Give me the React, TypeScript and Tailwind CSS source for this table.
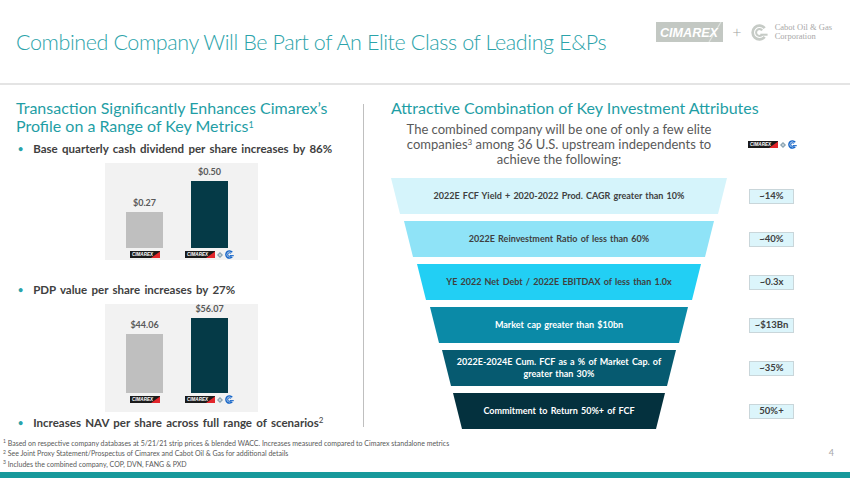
import React from 'react';

type Bar = { label: string; barCls: string; combined?: boolean };

const bands = [
  {
    text: '2022E  FCF Yield + 2020-2022  Prod. CAGR greater than 10%',
    cls: 'mx-0 bg-[#d5f4fb] text-[#404040]',
    value: '~14%',
  },
  {
    text: '2022E  Reinvestment  Ratio of less than 60%',
    cls: 'mx-[13px] bg-[#8fe3f7] text-[#404040]',
    value: '~40%',
  },
  {
    text: 'YE 2022  Net Debt / 2022E  EBITDAX of less than 1.0x',
    cls: 'mx-[26px] bg-[#22cff4] text-[#404040]',
    value: '~0.3x',
  },
  {
    text: 'Market  cap greater  than $10bn',
    cls: 'mx-[39px] bg-[#0b8aa7] text-white',
    value: '~$13Bn',
  },
  {
    text: '2022E-2024E  Cum. FCF as a % of Market  Cap. of\ngreater than 30%',
    cls: 'mx-[51px] bg-[#065a70] text-white',
    value: '~35%',
  },
  {
    text: 'Commitment to Return 50%+  of FCF',
    cls: 'mx-[62px] bg-[#04313e] text-white',
    value: '50%+',
  },
];

const CimarexMini = () => (
  <svg width="30" height="7" viewBox="0 0 30 7" className="shrink-0">
    <rect x="0" y="0" width="30" height="7" fill="#1b1b1b" />
    <polygon points="21,7 30,0.5 30,7" fill="#e2262b" />
    <text
      x="2"
      y="5.4"
      fontSize="5"
      fontStyle="italic"
      fontWeight="900"
      fill="#ffffff"
      textLength="21"
      lengthAdjust="spacingAndGlyphs"
      fontFamily="Liberation Sans, Arial, sans-serif"
    >
      CIMAREX
    </text>
  </svg>
);

const CabotMark = ({ size, color }: { size: number; color: string }) => (
  <svg width={size} height={size} viewBox="0 0 20 20" className="shrink-0">
    <path d="M16.1 4.9 A8 8 0 1 0 16.1 15.1" fill="none" stroke={color} strokeWidth="3.2" />
    <path d="M13.2 7.6 A4 4 0 1 0 13.2 12.4" fill="none" stroke={color} strokeWidth="2.4" />
    <path d="M11 12.6 H19.5" stroke={color} strokeWidth="2.4" />
  </svg>
);

const Diamond = () => (
  <svg width="6" height="6" viewBox="0 0 6 6" className="shrink-0">
    <path d="M3 0 L6 3 L3 6 L0 3 Z" fill="#7f9bab" />
    <path d="M3 1.6 V4.4 M1.6 3 H4.4" stroke="#ffffff" strokeWidth="0.6" />
  </svg>
);

const CombinedMini = () => (
  <span className="flex items-center gap-[2px]">
    <CimarexMini />
    <Diamond />
    <CabotMark size={9} color="#1565c8" />
  </span>
);

const BarChart = ({ heightCls, padCls, bars }: { heightCls: string; padCls: string; bars: Bar[] }) => (
  <div className={`ml-[89px] flex w-[153px] items-end gap-[28px] bg-[#f2f2f2] pl-[21px] ${heightCls} ${padCls}`}>
    {bars.map((bar) => (
      <div key={bar.label} className="flex w-[37px] flex-col items-center">
        <span className="mb-[4px] text-[9px] font-bold leading-[10px] text-[#595959]">{bar.label}</span>
        <div className={`w-full ${bar.barCls}`} />
        <div className="mt-[3px] flex h-[7px] items-center justify-center">
          {bar.combined ? <CombinedMini /> : <CimarexMini />}
        </div>
      </div>
    ))}
  </div>
);

const Bullet = ({ children, className = '' }: { children: React.ReactNode; className?: string }) => (
  <div className={`flex items-center gap-[10px] pl-[2px] text-[11.5px] font-bold leading-[14px] text-[#404040] ${className}`}>
    <span className="text-[9px] text-[#2ba3aa]">•</span>
    <span className="[word-spacing:1.5px]">{children}</span>
  </div>
);

export default function App() {
  return (
    <div className="flex h-[478px] w-[850px] flex-col overflow-hidden bg-white font-['Lato','Open_Sans',sans-serif]">
      {/* header */}
      <header className="flex h-[85px] shrink-0 justify-between border-b-2 border-[#e4e4e4] pl-4 pr-[18px]">
        <h1 className="self-center whitespace-nowrap pt-[2px] text-[21.5px] font-light leading-none tracking-[-0.4px] text-[#2ba3aa]">
          Combined Company Will Be Part of An Elite Class of Leading E&amp;Ps
        </h1>
        <div className="mt-[22px] flex h-[20px] items-center self-start">
          <svg width="67" height="20" viewBox="0 0 67 20" className="shrink-0">
            <rect x="0" y="0" width="67" height="20" fill="#c3c8c3" />
            <path d="M53 20 L65 0" stroke="#dfe3df" strokeWidth="1.2" />
            <text
              x="4"
              y="15"
              fontSize="13"
              fontStyle="italic"
              fontWeight="900"
              fill="#ffffff"
              textLength="58"
              lengthAdjust="spacingAndGlyphs"
              fontFamily="Liberation Sans, Arial, sans-serif"
            >
              CIMAREX
            </text>
          </svg>
          <span className="ml-[9px] mr-[9px] text-[16px] font-light leading-none text-[#a0a0a0]">+</span>
          <CabotMark size={17} color="#c6cbc6" />
          <div className="ml-[7px] whitespace-nowrap font-['Liberation_Serif',serif] text-[8.5px] leading-[9px] text-[#a8a8a8]">
            <div>Cabot Oil &amp; Gas</div>
            <div>Corporation</div>
          </div>
        </div>
      </header>

      {/* body */}
      <main className="flex flex-1 pt-[14px]">
        <section className="flex w-[363px] shrink-0 flex-col pl-4">
          <h2 className="text-[16px] leading-[18px] text-[#1f9ea5]">
            Transaction Significantly Enhances Cimarex&rsquo;s
            <br />
            Profile on a Range of Key Metrics<sup className="text-[9px]">1</sup>
          </h2>
          <Bullet className="mt-[7px]">Base quarterly cash dividend per share increases by 86%</Bullet>
          <div className="mt-[7px]">
            <BarChart
              heightCls="h-[97px]"
              padCls="pb-[2px]"
              bars={[
                { label: '$0.27', barCls: 'h-[36px] bg-[#bfbfbf]' },
                { label: '$0.50', barCls: 'h-[67px] bg-[#053a47]', combined: true },
              ]}
            />
          </div>
          <Bullet className="mt-[23px]">PDP value per share increases by 27%</Bullet>
          <div className="mt-[7px]">
            <BarChart
              heightCls="h-[108px]"
              padCls="pb-[9px]"
              bars={[
                { label: '$44.06', barCls: 'h-[59px] bg-[#bfbfbf]' },
                { label: '$56.07', barCls: 'h-[75px] bg-[#053a47]', combined: true },
              ]}
            />
          </div>
          <Bullet className="mt-[4px]">
            Increases NAV per share across full range of scenarios<sup className="text-[8px] font-normal">2</sup>
          </Bullet>
        </section>

        <div className="mt-[5px] h-[323px] w-px bg-[#bfbfbf]" />

        <section className="flex flex-1 flex-col pl-[27px]">
          <h2 className="whitespace-nowrap text-[16px] leading-[18px] text-[#1f9ea5]">
            Attractive Combination of Key Investment Attributes
          </h2>
          <div className="mt-[5px] grid grid-cols-[336px_56px] items-center gap-x-[21px]">
            <p className="text-center text-[13px] leading-[15px] text-[#595959]">
              The combined company will be one of only a few elite
              <br />
              companies<sup className="text-[8px]">3</sup> among 36 U.S. upstream independents to
              <br />
              achieve the following:
            </p>
            <div className="flex justify-start">
              <CombinedMini />
            </div>
          </div>
          <div className="mt-[11px] grid grid-cols-[336px_56px] items-center gap-x-[22px] gap-y-[7px]">
            {bands.map((band) => (
              <React.Fragment key={band.value}>
                <div
                  className={`flex h-[36px] items-center justify-center whitespace-pre-line text-center text-[9px] font-bold leading-[12px] [word-spacing:1px] [clip-path:polygon(0_0,100%_0,calc(100%_-_9px)_100%,9px_100%)] ${band.cls}`}
                >
                  {band.text}
                </div>
                <div className="flex h-[15px] w-[45px] items-center justify-center border border-[#c9d6da] bg-[#dcf5fb] text-[9.5px] font-bold text-[#404040]">
                  {band.value}
                </div>
              </React.Fragment>
            ))}
          </div>
        </section>
      </main>

      {/* footnotes */}
      <footer className="flex h-[42px] shrink-0 flex-col justify-end">
        <div className="flex items-end justify-between pb-[3px] pl-[3px] pr-[16px]">
          <div className="text-[7px] leading-[10.5px] text-[#595959]">
            <div>
              <sup className="text-[5px]">1</sup> Based on respective company databases at 5/21/21 strip prices &amp; blended WACC. Increases measured compared to Cimarex standalone metrics
            </div>
            <div>
              <sup className="text-[5px]">2</sup> See Joint Proxy Statement/Prospectus of Cimarex and Cabot Oil &amp; Gas for additional details
            </div>
            <div>
              <sup className="text-[5px]">3</sup> Includes the combined company, COP, DVN, FANG &amp; PXD
            </div>
          </div>
          <span className="mb-[10px] text-[9px] text-[#a6a6a6]">4</span>
        </div>
        <div className="h-[6px] bg-[#17999b]" />
      </footer>
    </div>
  );
}
